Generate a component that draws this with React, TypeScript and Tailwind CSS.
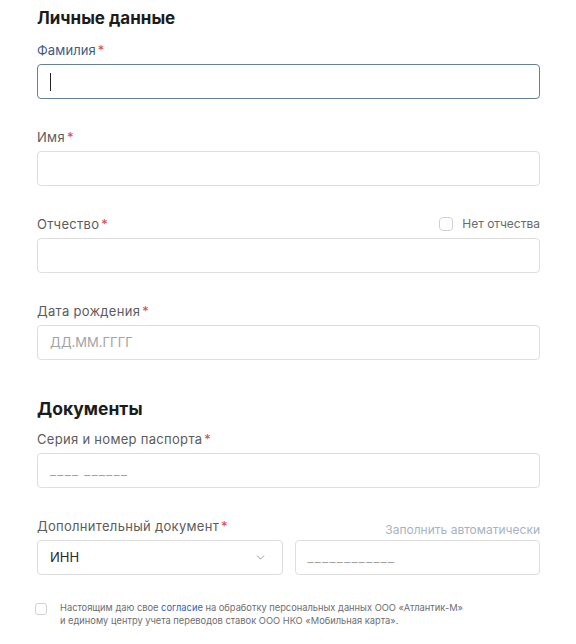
import { ChevronDown } from "lucide-react"

function Label({ text, active }: { text: string; active?: boolean }) {
  return (
    <span
      className={
        active
          ? "text-[13px] leading-4 tracking-[0.1px] text-[#3f5b7e]"
          : "text-[13px] leading-4 tracking-[0.3px] text-[#5c5c5c]"
      }
    >
      {text}
      <span className="ml-[2px] text-[#d24b4b]">*</span>
    </span>
  )
}

function Field({
  label,
  placeholder,
  dashes,
  active,
  extra,
}: {
  label: string
  placeholder?: string
  dashes?: boolean
  active?: boolean
  extra?: React.ReactNode
}) {
  return (
    <div className="flex flex-col gap-[6px]">
      <div className="flex h-4 items-center justify-between">
        <Label text={label} active={active} />
        {extra}
      </div>
      <div
        className={
          active
            ? "flex h-[35px] items-center rounded-[4px] border-[1.5px] border-[#62809a] px-3"
            : "flex h-[35px] items-center rounded-[4px] border border-[#dedede] px-3"
        }
      >
        {active && <span className="h-[18px] w-px bg-[#222]" />}
        {placeholder && (
          <span className={dashes ? "text-[13px] tracking-[1.4px] text-[#a3a3a3]" : "text-[13px] text-[#a3a3a3]"}>
            {placeholder}
          </span>
        )}
      </div>
    </div>
  )
}

export default function App() {
  return (
    <div className="min-h-[644px] bg-white font-['Inter','Noto_Sans',sans-serif]">
      <div className="ml-[37px] flex w-[503px] flex-col pt-[6px]">
        <h2 className="text-[17px] leading-6 font-bold text-[#1c1c1c]">Личные данные</h2>

        <div className="mt-[12px] flex flex-col gap-[30px]">
          <Field label="Фамилия" active />
          <Field label="Имя" />
          <Field
            label="Отчество"
            extra={
              <label className="flex items-center gap-[9px]">
                <span className="h-[14px] w-[14px] rounded-[4px] border border-[#d2d2d2]" />
                <span className="text-[12px] text-[#6b6b6b]">Нет отчества</span>
              </label>
            }
          />
          <Field label="Дата рождения" placeholder="ДД.ММ.ГГГГ" />
        </div>

        <h2 className="mt-[36px] text-[17.5px] leading-[26px] font-bold text-[#1c1c1c]">Документы</h2>

        <div className="mt-[9px] flex flex-col gap-[30px]">
          <Field label="Серия и номер паспорта" placeholder="____ ______" dashes />

          <div className="flex flex-col gap-[6px]">
            <div className="flex h-4 items-center justify-between">
              <Label text="Дополнительный документ" />
              <span className="mt-[8px] text-[12px] text-[#a6b3c4]">Заполнить автоматически</span>
            </div>
            <div className="grid grid-cols-2 gap-3">
              <div className="flex h-[35px] items-center justify-between rounded-[4px] border border-[#dedede] pr-[15px] pl-3">
                <span className="text-[13px] text-[#2a2a2a]">ИНН</span>
                <ChevronDown className="h-[13px] w-[13px] text-[#8a8a8a]" strokeWidth={1.5} />
              </div>
              <div className="flex h-[35px] items-center rounded-[4px] border border-[#dedede] px-3">
                <span className="text-[13px] tracking-[1.4px] text-[#a3a3a3]">____________</span>
              </div>
            </div>
          </div>
        </div>

        <div className="mt-[26px] flex gap-[13px]">
          <span className="ml-[-2px] mt-[2px] h-[12px] w-[12px] shrink-0 rounded-[3px] border border-[#d2d2d2]" />
          <p className="text-[9.3px] leading-[13px] text-[#6e6e6e]">
            Настоящим даю свое <span className="text-[#2f62c4]">согласие</span> на обработку персональных данных ООО «Атлантик-М»
            <br />и единому центру учета переводов ставок ООО НКО «Мобильная карта».
          </p>
        </div>
      </div>
    </div>
  )
}
